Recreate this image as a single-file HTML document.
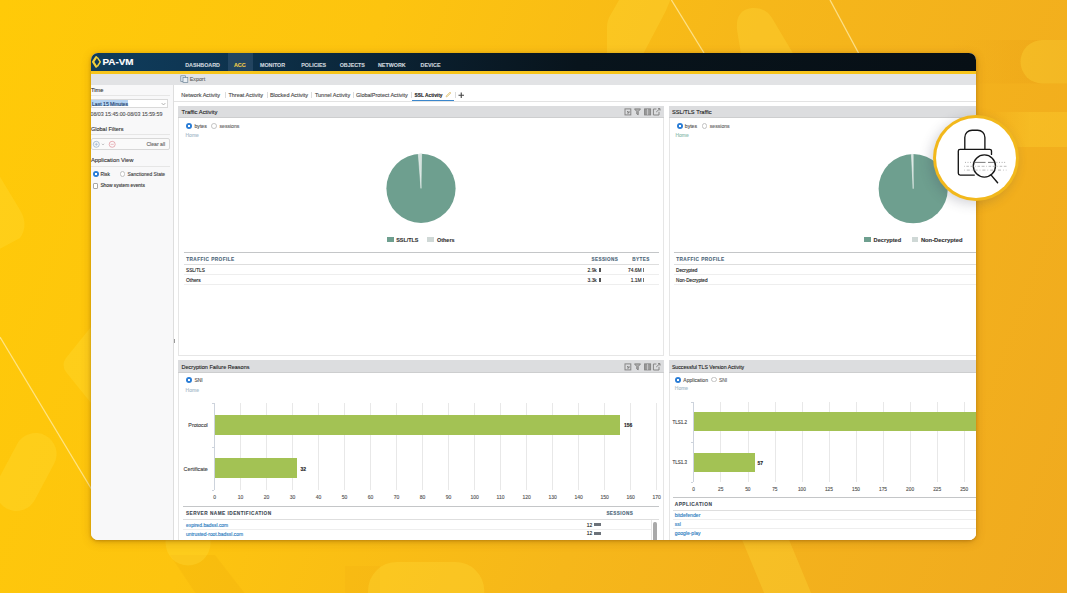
<!DOCTYPE html><html><head><meta charset="utf-8"><style>
*{box-sizing:border-box;margin:0;padding:0}
html,body{width:1067px;height:593px;overflow:hidden}
body{position:relative;font-family:"Liberation Sans",sans-serif;color:#333;
background:linear-gradient(110deg,#ffca08 0%,#fdc40f 30%,#f6b71a 60%,#f0aa1f 100%)}
.a{position:absolute;white-space:nowrap;line-height:1;-webkit-text-stroke:0.12px currentColor}
.win{position:absolute;left:91px;top:53px;width:885px;height:487px;border-radius:7px;overflow:hidden;background:#fff;
box-shadow:0 1px 3px rgba(120,70,0,0.35),0 2px 10px rgba(140,80,0,0.3)}
.in{position:absolute;left:-91px;top:-53px;width:1067px;height:593px}
</style></head><body>
<svg class="a" style="left:0;top:0" width="1067" height="593" viewBox="0 0 1067 593">
<defs><linearGradient id="dk" x1="0" x2="1"><stop offset="0" stop-color="rgb(210,120,0)" stop-opacity="0"/><stop offset="1" stop-color="rgb(210,120,0)" stop-opacity="0.13"/></linearGradient></defs>
<rect x="950" y="40" width="120" height="43.5" fill="url(#dk)"/>
<defs><linearGradient id="lt" x1="0" x2="1"><stop offset="0" stop-color="rgb(255,215,50)" stop-opacity="0"/><stop offset="0.5" stop-color="rgb(255,215,50)" stop-opacity="0.3"/><stop offset="1" stop-color="rgb(255,215,50)" stop-opacity="0.3"/></linearGradient></defs>
<rect x="990" y="112" width="80" height="35" fill="url(#lt)"/>
<g fill="rgba(200,110,0,0.07)">
<path d="M345 566 H380 V600 H345 Z" opacity="0.6"/>
<path d="M170 555 L215 555 L250 600 L200 600 Z"/>
</g>
<g fill="rgba(255,222,60,0.3)">
<!-- top pill left -->
<path d="M607 60 V27 Q607 20 611 14 L622 -5 H672 Q668 8 660 22 L640 60 Z"/>
<!-- top pill right -->
<path d="M742 60 L737 30 Q735 10 752 8 Q765 7 772 18 L797 60 Z"/>
<!-- top-right horizontal pill -->
<rect x="1020.5" y="40" width="90" height="43.5" rx="21.75"/>
<!-- left upper chevron -->
<path d="M-10 160 L20 210 Q29 225 20 238 L-10 254 Z"/>
<!-- left chevron near window -->
<path d="M95 322 L66 358 Q61 365 66 372 L95 408 Z"/>
<!-- left pill -->
<rect x="5" y="430.6" width="42" height="82.8" rx="21" transform="rotate(28 26 472)"/>
<!-- bottom pill small -->
<path d="M165.6 530 V543 A22.5 22.5 0 0 0 210.6 543 V530 Z"/>
<!-- bottom big pill -->
<rect x="368" y="561.9" width="116.3" height="60" rx="29"/>
<!-- bottom right stripe -->
<path d="M738 530 L785 530 L814 600 L767 600 Z"/>
</g>
<g stroke="rgba(255,238,170,0.75)" stroke-width="1.3">
<line x1="671.4" y1="0" x2="704" y2="53"/>
<line x1="830" y1="0" x2="858.5" y2="53"/>
<line x1="0" y1="337" x2="92" y2="490"/>
</g>
</svg>
<div class="win"><div class="in">
<div class="a" style="left:91px;top:53px;width:885.00px;height:18.00px;background:linear-gradient(90deg,#0f3c5c 0%,#0e3653 12%,#0c2b41 25%,#0a1d2b 40%,#08141c 55%,#070f15 100%);"></div>
<div class="a" style="left:227.5px;top:53px;width:25.00px;height:18.00px;background:rgba(90,120,150,0.28);"></div>
<svg class="a" style="left:91px;top:56px" width="11" height="12" viewBox="0 0 11 12">
<path d="M5.2 1.2 L2.1 5.9 L5.2 10.6" fill="none" stroke="#f1cf3a" stroke-width="2.2" stroke-linejoin="round" stroke-linecap="round"/>
<path d="M6.6 1.8 L9.3 5.9 L6.6 10" fill="none" stroke="#f1cf3a" stroke-width="1.5" stroke-linejoin="round" stroke-linecap="round"/>
</svg>
<div class="a" style="left:102.5px;top:56.55px;font-size:9.9px;color:#ffffff;font-weight:bold;">PA-VM</div>
<div class="a" style="left:185.2px;top:63.04px;font-size:5.35px;color:#cdd6de;font-weight:bold;">DASHBOARD</div>
<div class="a" style="left:234px;top:63.04px;font-size:5.35px;color:#f0cf4a;font-weight:bold;">ACC</div>
<div class="a" style="left:260px;top:63.04px;font-size:5.35px;color:#cdd6de;font-weight:bold;">MONITOR</div>
<div class="a" style="left:301.2px;top:63.04px;font-size:5.35px;color:#cdd6de;font-weight:bold;">POLICIES</div>
<div class="a" style="left:339.7px;top:63.04px;font-size:5.35px;color:#cdd6de;font-weight:bold;">OBJECTS</div>
<div class="a" style="left:378px;top:63.04px;font-size:5.35px;color:#cdd6de;font-weight:bold;">NETWORK</div>
<div class="a" style="left:420.6px;top:63.04px;font-size:5.35px;color:#cdd6de;font-weight:bold;">DEVICE</div>
<div class="a" style="left:91px;top:71px;width:885.00px;height:2.60px;background:#f7c51c;"></div>
<div class="a" style="left:91px;top:73.6px;width:885.00px;height:11.40px;background:#e2e3e5;"></div>
<svg class="a" style="left:180px;top:75px" width="9" height="8" viewBox="0 0 9 8">
<rect x="0.8" y="0.8" width="4.6" height="5.8" fill="#dde6ee" stroke="#6f8598" stroke-width="0.7"/>
<rect x="3" y="2.6" width="4.8" height="4.8" fill="#e9eef3" stroke="#6f8598" stroke-width="0.7"/>
</svg>
<div class="a" style="left:189.8px;top:77.11px;font-size:5.3px;color:#666;">Export</div>
<div class="a" style="left:91px;top:85px;width:82.00px;height:455.00px;background:#f8f8f9;"></div>
<div class="a" style="left:173px;top:85px;width:1.00px;height:455.00px;background:#dedede;"></div>
<div class="a" style="left:91px;top:88.42px;font-size:5.7px;color:#333;">Time</div>
<div class="a" style="left:91px;top:95.2px;width:79.00px;height:0.80px;background:#e6e6e6;"></div>
<div class="a" style="left:91px;top:99.3px;width:76.50px;height:8.70px;background:#ffffff;border:0.8px solid #d9d9d9;"></div>
<div class="a" style="left:91px;top:100.4px;width:37.00px;height:6.00px;background:#b4d3f2;"></div>
<div class="a" style="left:92px;top:101.51px;font-size:5.1px;color:#1d3d6a;">Last 15 Minutes</div>
<svg class="a" style="left:160.5px;top:102px" width="5" height="4" viewBox="0 0 5 4"><path d="M0.6 1 L2.5 3 L4.4 1" fill="none" stroke="#888" stroke-width="0.6"/></svg>
<div class="a" style="left:90.5px;top:112.38px;font-size:5.25px;color:#555;">08/03 15:45:00-08/03 15:59:59</div>
<div class="a" style="left:91px;top:127.11px;font-size:5.5px;color:#333;">Global Filters</div>
<div class="a" style="left:91px;top:134.2px;width:79.00px;height:0.80px;background:#e6e6e6;"></div>
<div class="a" style="left:91px;top:138px;width:78.50px;height:12.00px;background:#fafafa;border:0.8px solid #d8d8d8;border-radius:2px;"></div>
<svg class="a" style="left:92px;top:139.5px" width="24" height="9" viewBox="0 0 24 9">
<circle cx="4.3" cy="4.3" r="3" fill="none" stroke="#8fa9c7" stroke-width="0.7"/>
<path d="M4.3 2.7 V5.9 M2.7 4.3 H5.9" stroke="#8fa9c7" stroke-width="0.6"/>
<path d="M10 3.8 L11 4.8 L12 3.8" fill="none" stroke="#888" stroke-width="0.6"/>
<circle cx="20.2" cy="4.3" r="3" fill="none" stroke="#e0909a" stroke-width="0.7"/>
<path d="M18.6 4.3 H21.8" stroke="#e0909a" stroke-width="0.6"/>
</svg>
<div class="a" style="left:146.4px;top:142.01px;font-size:5.15px;color:#666;">Clear all</div>
<div class="a" style="left:91px;top:157.69px;font-size:5.8px;color:#333;">Application View</div>
<div class="a" style="left:91px;top:166px;width:79.00px;height:0.80px;background:#e6e6e6;"></div>
<div class="a" style="left:92.70px;top:170.70px;width:6px;height:6px;border-radius:50%;background:radial-gradient(circle,#fff 0,#fff 0.9px,#2a7dd6 1.4px)"></div>
<div class="a" style="left:100.5px;top:172.91px;font-size:4.8px;color:#333;">Risk</div>
<div class="a" style="left:119.60px;top:170.80px;width:5.8px;height:5.8px;border-radius:50%;background:#fff;border:0.6px solid #c2c2c2"></div>
<div class="a" style="left:127.5px;top:172.91px;font-size:4.95px;color:#444;">Sanctioned State</div>
<div class="a" style="left:92.7px;top:182.8px;width:5.70px;height:5.90px;background:#fff;border:0.7px solid #a8a8a8;border-radius:1px;"></div>
<div class="a" style="left:100.4px;top:184.39px;font-size:4.85px;color:#333;">Show system events</div>
<div class="a" style="left:173.5px;top:337px;width:1.00px;height:6.00px;background:#aaa;"></div>
<div class="a" style="left:174px;top:85px;width:802.00px;height:455.00px;background:#ffffff;"></div>
<div class="a" style="left:174.2px;top:338.5px;width:1.20px;height:4.00px;background:#999;"></div>
<div class="a" style="left:181.3px;top:92.91px;font-size:5.5px;color:#4a4a4a;">Network Activity</div>
<div class="a" style="left:228.4px;top:92.91px;font-size:5.5px;color:#4a4a4a;">Threat Activity</div>
<div class="a" style="left:269.9px;top:92.91px;font-size:5.5px;color:#4a4a4a;">Blocked Activity</div>
<div class="a" style="left:314.9px;top:92.91px;font-size:5.5px;color:#4a4a4a;">Tunnel Activity</div>
<div class="a" style="left:355.9px;top:92.91px;font-size:5.5px;color:#4a4a4a;">GlobalProtect Activity</div>
<div class="a" style="left:224.9px;top:91.8px;width:0.70px;height:5.80px;background:#dcdcdc;"></div>
<div class="a" style="left:266.7px;top:91.8px;width:0.70px;height:5.80px;background:#dcdcdc;"></div>
<div class="a" style="left:311.4px;top:91.8px;width:0.70px;height:5.80px;background:#dcdcdc;"></div>
<div class="a" style="left:353.3px;top:91.8px;width:0.70px;height:5.80px;background:#dcdcdc;"></div>
<div class="a" style="left:411.4px;top:91.8px;width:0.70px;height:5.80px;background:#dcdcdc;"></div>
<div class="a" style="left:455px;top:91.8px;width:0.70px;height:5.80px;background:#dcdcdc;"></div>
<div class="a" style="left:414.5px;top:93.74px;font-size:4.85px;color:#222;font-weight:bold;">SSL Activity</div>
<svg class="a" style="left:445px;top:91px" width="7" height="7" viewBox="0 0 7 7"><path d="M1 6 L1.4 4.6 L5 1 L6 2 L2.4 5.6 Z" fill="#f3e4b8" stroke="#d8b868" stroke-width="0.5"/></svg>
<svg class="a" style="left:458px;top:91.5px" width="6.5" height="6.5" viewBox="0 0 6.5 6.5"><path d="M3.25 0.5 V6 M0.5 3.25 H6" stroke="#444" stroke-width="1.1"/></svg>
<div class="a" style="left:412px;top:99.6px;width:42.30px;height:1.00px;background:#3b87cc;"></div>
<div class="a" style="left:174px;top:100.6px;width:802.00px;height:1.00px;background:#e3e3e3;"></div>
<div class="a" style="left:178.2px;top:105.8px;width:485.60px;height:250.50px;background:#ffffff;border:0.8px solid #e6e6e6;"></div>
<div class="a" style="left:178.2px;top:105.8px;width:485.60px;height:12.60px;background:#dcdddf;border-bottom:0.6px solid #cdcecf;"></div>
<div class="a" style="left:181.6px;top:110.21px;font-size:5.85px;color:#1a1a1a;-webkit-text-stroke:0.1px #1a1a1a;">Traffic Activity</div>
<svg class="a" style="left:623.8px;top:108.39999999999999px" width="38" height="8" viewBox="0 0 38 8">
<g fill="none" stroke="#858585" stroke-width="1">
<rect x="1" y="0.9" width="5.8" height="6"/><path d="M3 3 L5 5 M5 3 V5 H3"/>
<path d="M10.5 0.9 H16.5 L14.2 3.6 V6.8 L12.8 6 V3.6 Z" fill="#b0b0b0"/>
<rect x="20.6" y="0.9" width="6" height="6" fill="#9a9a9a"/><path d="M23.6 0.9 V6.9" stroke="#dcdddf" stroke-width="0.7"/>
<path d="M35 3.8 V7 H29.4 V1 H32.4"/><path d="M32.2 4 L36 0.6 M34 0.6 H36 V2.6"/>
</g></svg>
<div class="a" style="left:186.30px;top:123.10px;width:6px;height:6px;border-radius:50%;background:radial-gradient(circle,#fff 0,#fff 0.9px,#2a7dd6 1.4px)"></div>
<div class="a" style="left:194.5px;top:124.41px;font-size:5.1px;color:#555;">bytes</div>
<div class="a" style="left:211.40px;top:123.20px;width:5.8px;height:5.8px;border-radius:50%;background:#fff;border:0.6px solid #c2c2c2"></div>
<div class="a" style="left:219.5px;top:124.41px;font-size:5.1px;color:#666;">sessions</div>
<div class="a" style="left:185.5px;top:133.31px;font-size:5.0px;color:#a8bccb;">Home</div>
<svg class="a" style="left:0;top:0" width="1067" height="593" viewBox="0 0 1067 593">
<circle cx="421.0" cy="188.4" r="34.6" fill="#6e9f8f"/>
<path d="M421.0 188.4 L418.29 153.91 A34.6 34.6 0 0 1 421.60 153.81 Z" fill="#d4e2dd" stroke="#f4f7f6" stroke-width="0.5"/>
</svg>
<div class="a" style="left:386.5px;top:237.2px;width:7.10px;height:5.20px;background:#6e9f8f;"></div>
<div class="a" style="left:396.2px;top:237.94px;font-size:5.4px;color:#333;font-weight:bold;">SSL/TLS</div>
<div class="a" style="left:427.2px;top:237.2px;width:7.10px;height:5.20px;background:#cfd8d6;"></div>
<div class="a" style="left:437.0px;top:237.94px;font-size:5.45px;color:#333;font-weight:bold;">Others</div>
<div class="a" style="left:184px;top:251.7px;width:475.00px;height:0.90px;background:#c4c6c8;"></div>
<div class="a" style="left:186.2px;top:257.74px;font-size:4.7px;color:#4d6679;font-weight:bold;letter-spacing:0.45px;">TRAFFIC PROFILE</div>
<div class="a" style="left:618.2px;top:257.54px;font-size:4.6px;color:#4d6679;font-weight:bold;letter-spacing:0.4px;transform:translateX(-100%);">SESSIONS</div>
<div class="a" style="left:649.7px;top:257.54px;font-size:4.6px;color:#4d6679;font-weight:bold;letter-spacing:0.4px;transform:translateX(-100%);">BYTES</div>
<div class="a" style="left:184px;top:264.4px;width:475.00px;height:0.80px;background:#dedede;"></div>
<div class="a" style="left:186px;top:268.91px;font-size:4.7px;color:#222;">SSL/TLS</div>
<div class="a" style="left:596.8px;top:268.91px;font-size:4.9px;color:#222;transform:translateX(-100%);">2.9k</div>
<div class="a" style="left:599.2px;top:267.9px;width:1.40px;height:4.10px;background:#555;"></div>
<div class="a" style="left:641.6px;top:268.91px;font-size:4.9px;color:#222;transform:translateX(-100%);">74.6M</div>
<div class="a" style="left:642.6px;top:267.9px;width:0.70px;height:4.10px;background:#777;"></div>
<div class="a" style="left:184px;top:274.3px;width:475.00px;height:0.70px;background:#eeeeee;"></div>
<div class="a" style="left:186px;top:278.71px;font-size:4.9px;color:#222;">Others</div>
<div class="a" style="left:596.8px;top:278.61px;font-size:4.9px;color:#222;transform:translateX(-100%);">3.3k</div>
<div class="a" style="left:599.2px;top:277.6px;width:1.40px;height:4.10px;background:#555;"></div>
<div class="a" style="left:641.6px;top:278.61px;font-size:4.9px;color:#222;transform:translateX(-100%);">1.1M</div>
<div class="a" style="left:642.6px;top:277.6px;width:0.70px;height:4.10px;background:#777;"></div>
<div class="a" style="left:184px;top:284px;width:475.00px;height:0.70px;background:#eeeeee;"></div>
<div class="a" style="left:668.5px;top:105.8px;width:321.50px;height:250.50px;background:#ffffff;border:0.8px solid #e6e6e6;"></div>
<div class="a" style="left:668.5px;top:105.8px;width:321.50px;height:12.60px;background:#dcdddf;border-bottom:0.6px solid #cdcecf;"></div>
<div class="a" style="left:671.9px;top:110.22px;font-size:5.7px;color:#1a1a1a;-webkit-text-stroke:0.1px #1a1a1a;">SSL/TLS Traffic</div>
<div class="a" style="left:676.60px;top:122.90px;width:6px;height:6px;border-radius:50%;background:radial-gradient(circle,#fff 0,#fff 0.9px,#2a7dd6 1.4px)"></div>
<div class="a" style="left:684.8px;top:124.21px;font-size:5.1px;color:#555;">bytes</div>
<div class="a" style="left:701.70px;top:123.00px;width:5.8px;height:5.8px;border-radius:50%;background:#fff;border:0.6px solid #c2c2c2"></div>
<div class="a" style="left:709.8px;top:124.21px;font-size:5.1px;color:#666;">sessions</div>
<div class="a" style="left:675.4px;top:133.41px;font-size:5.0px;color:#8fc0b0;">Home</div>
<svg class="a" style="left:0;top:0" width="1067" height="593" viewBox="0 0 1067 593">
<circle cx="913.2" cy="188.7" r="34.6" fill="#6e9f8f"/>
<path d="M913.2 188.7 L911.39 154.15 A34.6 34.6 0 0 1 913.20 154.10 Z" fill="#d4e2dd" stroke="#f4f7f6" stroke-width="0.5"/>
</svg>
<div class="a" style="left:864.3px;top:237.4px;width:7.00px;height:5.00px;background:#6e9f8f;"></div>
<div class="a" style="left:873.6px;top:237.94px;font-size:5.65px;color:#333;font-weight:bold;">Decrypted</div>
<div class="a" style="left:911.6px;top:237.4px;width:6.50px;height:5.00px;background:#cfd8d6;"></div>
<div class="a" style="left:920.9px;top:237.94px;font-size:5.8px;color:#333;font-weight:bold;">Non-Decrypted</div>
<div class="a" style="left:674px;top:251.7px;width:316.00px;height:0.90px;background:#c4c6c8;"></div>
<div class="a" style="left:676.2px;top:257.74px;font-size:4.7px;color:#4d6679;font-weight:bold;letter-spacing:0.45px;">TRAFFIC PROFILE</div>
<div class="a" style="left:674px;top:264.4px;width:316.00px;height:0.80px;background:#dedede;"></div>
<div class="a" style="left:676px;top:268.91px;font-size:4.7px;color:#222;">Decrypted</div>
<div class="a" style="left:674px;top:274.3px;width:316.00px;height:0.70px;background:#eeeeee;"></div>
<div class="a" style="left:676px;top:278.71px;font-size:4.7px;color:#222;">Non-Decrypted</div>
<div class="a" style="left:674px;top:284px;width:316.00px;height:0.70px;background:#eeeeee;"></div>
<div class="a" style="left:178.2px;top:360.4px;width:485.60px;height:199.60px;background:#ffffff;border:0.8px solid #e6e6e6;"></div>
<div class="a" style="left:178.2px;top:360.4px;width:485.60px;height:12.60px;background:#dcdddf;border-bottom:0.6px solid #cdcecf;"></div>
<div class="a" style="left:181.6px;top:364.81px;font-size:5.5px;color:#1a1a1a;-webkit-text-stroke:0.1px #1a1a1a;">Decryption Failure Reasons</div>
<svg class="a" style="left:623.8px;top:363.0px" width="38" height="8" viewBox="0 0 38 8">
<g fill="none" stroke="#858585" stroke-width="1">
<rect x="1" y="0.9" width="5.8" height="6"/><path d="M3 3 L5 5 M5 3 V5 H3"/>
<path d="M10.5 0.9 H16.5 L14.2 3.6 V6.8 L12.8 6 V3.6 Z" fill="#b0b0b0"/>
<rect x="20.6" y="0.9" width="6" height="6" fill="#9a9a9a"/><path d="M23.6 0.9 V6.9" stroke="#dcdddf" stroke-width="0.7"/>
<path d="M35 3.8 V7 H29.4 V1 H32.4"/><path d="M32.2 4 L36 0.6 M34 0.6 H36 V2.6"/>
</g></svg>
<div class="a" style="left:186.20px;top:377.10px;width:6px;height:6px;border-radius:50%;background:radial-gradient(circle,#fff 0,#fff 0.9px,#2a7dd6 1.4px)"></div>
<div class="a" style="left:194.4px;top:378.31px;font-size:5.0px;color:#555;">SNI</div>
<div class="a" style="left:185.6px;top:388.11px;font-size:5.0px;color:#a8bccb;">Home</div>
<div class="a" style="left:240.3px;top:403.3px;width:0.80px;height:87.20px;background:#e8e8e8;"></div>
<div class="a" style="left:266.3px;top:403.3px;width:0.80px;height:87.20px;background:#e8e8e8;"></div>
<div class="a" style="left:292.3px;top:403.3px;width:0.80px;height:87.20px;background:#e8e8e8;"></div>
<div class="a" style="left:318.3px;top:403.3px;width:0.80px;height:87.20px;background:#e8e8e8;"></div>
<div class="a" style="left:344.3px;top:403.3px;width:0.80px;height:87.20px;background:#e8e8e8;"></div>
<div class="a" style="left:370.3px;top:403.3px;width:0.80px;height:87.20px;background:#e8e8e8;"></div>
<div class="a" style="left:396.3px;top:403.3px;width:0.80px;height:87.20px;background:#e8e8e8;"></div>
<div class="a" style="left:422.3px;top:403.3px;width:0.80px;height:87.20px;background:#e8e8e8;"></div>
<div class="a" style="left:448.3px;top:403.3px;width:0.80px;height:87.20px;background:#e8e8e8;"></div>
<div class="a" style="left:474.3px;top:403.3px;width:0.80px;height:87.20px;background:#e8e8e8;"></div>
<div class="a" style="left:500.3px;top:403.3px;width:0.80px;height:87.20px;background:#e8e8e8;"></div>
<div class="a" style="left:526.3px;top:403.3px;width:0.80px;height:87.20px;background:#e8e8e8;"></div>
<div class="a" style="left:552.3px;top:403.3px;width:0.80px;height:87.20px;background:#e8e8e8;"></div>
<div class="a" style="left:578.3px;top:403.3px;width:0.80px;height:87.20px;background:#e8e8e8;"></div>
<div class="a" style="left:604.3px;top:403.3px;width:0.80px;height:87.20px;background:#e8e8e8;"></div>
<div class="a" style="left:630.3px;top:403.3px;width:0.80px;height:87.20px;background:#e8e8e8;"></div>
<div class="a" style="left:656.3px;top:403.3px;width:0.80px;height:87.20px;background:#e8e8e8;"></div>
<div class="a" style="left:214.0px;top:403.3px;width:0.90px;height:87.20px;background:#cdd3dc;"></div>
<div class="a" style="left:211.8px;top:403.3px;width:2.50px;height:0.70px;background:#cdd3dc;"></div>
<div class="a" style="left:211.8px;top:446.9px;width:2.50px;height:0.70px;background:#cdd3dc;"></div>
<div class="a" style="left:211.8px;top:490.0px;width:2.50px;height:0.70px;background:#cdd3dc;"></div>
<div class="a" style="left:214.9px;top:414.5px;width:405.00px;height:20.40px;background:#a3c254;"></div>
<div class="a" style="left:214.9px;top:458.4px;width:82.60px;height:20.00px;background:#a3c254;"></div>
<div class="a" style="left:623.9000000000001px;top:423.24px;font-size:5.0px;color:#222;font-weight:bold;">156</div>
<div class="a" style="left:300.5px;top:467.24px;font-size:5.0px;color:#222;font-weight:bold;">32</div>
<div class="a" style="left:207.8px;top:423.41px;font-size:5.3px;color:#444;transform:translateX(-100%);">Protocol</div>
<div class="a" style="left:207.8px;top:467.09px;font-size:5.4px;color:#444;transform:translateX(-100%);">Certificate</div>
<div class="a" style="left:214.60000000000002px;top:494.71px;font-size:5.0px;color:#555;transform:translateX(-50%);">0</div>
<div class="a" style="left:240.60000000000002px;top:494.71px;font-size:5.0px;color:#555;transform:translateX(-50%);">10</div>
<div class="a" style="left:266.6px;top:494.71px;font-size:5.0px;color:#555;transform:translateX(-50%);">20</div>
<div class="a" style="left:292.6px;top:494.71px;font-size:5.0px;color:#555;transform:translateX(-50%);">30</div>
<div class="a" style="left:318.6px;top:494.71px;font-size:5.0px;color:#555;transform:translateX(-50%);">40</div>
<div class="a" style="left:344.6px;top:494.71px;font-size:5.0px;color:#555;transform:translateX(-50%);">50</div>
<div class="a" style="left:370.6px;top:494.71px;font-size:5.0px;color:#555;transform:translateX(-50%);">60</div>
<div class="a" style="left:396.6px;top:494.71px;font-size:5.0px;color:#555;transform:translateX(-50%);">70</div>
<div class="a" style="left:422.6px;top:494.71px;font-size:5.0px;color:#555;transform:translateX(-50%);">80</div>
<div class="a" style="left:448.6px;top:494.71px;font-size:5.0px;color:#555;transform:translateX(-50%);">90</div>
<div class="a" style="left:474.6px;top:494.71px;font-size:5.0px;color:#555;transform:translateX(-50%);">100</div>
<div class="a" style="left:500.6px;top:494.71px;font-size:5.0px;color:#555;transform:translateX(-50%);">110</div>
<div class="a" style="left:526.5999999999999px;top:494.71px;font-size:5.0px;color:#555;transform:translateX(-50%);">120</div>
<div class="a" style="left:552.5999999999999px;top:494.71px;font-size:5.0px;color:#555;transform:translateX(-50%);">130</div>
<div class="a" style="left:578.5999999999999px;top:494.71px;font-size:5.0px;color:#555;transform:translateX(-50%);">140</div>
<div class="a" style="left:604.5999999999999px;top:494.71px;font-size:5.0px;color:#555;transform:translateX(-50%);">150</div>
<div class="a" style="left:630.5999999999999px;top:494.71px;font-size:5.0px;color:#555;transform:translateX(-50%);">160</div>
<div class="a" style="left:656.5999999999999px;top:494.71px;font-size:5.0px;color:#555;transform:translateX(-50%);">170</div>
<div class="a" style="left:183.2px;top:505.8px;width:475.80px;height:0.90px;background:#c4c6c8;"></div>
<div class="a" style="left:185.9px;top:511.74px;font-size:4.7px;color:#3f4a54;font-weight:bold;letter-spacing:0.5px;">SERVER NAME IDENTIFICATION</div>
<div class="a" style="left:633.1px;top:511.74px;font-size:4.6px;color:#4d6679;font-weight:bold;letter-spacing:0.4px;transform:translateX(-100%);">SESSIONS</div>
<div class="a" style="left:183.2px;top:519px;width:475.80px;height:0.80px;background:#dedede;"></div>
<div class="a" style="left:186px;top:523.91px;font-size:4.9px;color:#2a7bc0;">expired.badssl.com</div>
<div class="a" style="left:592.2px;top:523.61px;font-size:4.9px;color:#222;transform:translateX(-100%);">12</div>
<div class="a" style="left:594.2px;top:522.7px;width:6.70px;height:3.60px;background:#6c7279;"></div>
<div class="a" style="left:183.2px;top:528.8px;width:467.80px;height:0.70px;background:#eeeeee;"></div>
<div class="a" style="left:186px;top:532.71px;font-size:4.95px;color:#2a7bc0;">untrusted-root.badssl.com</div>
<div class="a" style="left:592.2px;top:532.41px;font-size:4.9px;color:#222;transform:translateX(-100%);">12</div>
<div class="a" style="left:594.2px;top:531.5px;width:6.70px;height:3.60px;background:#6c7279;"></div>
<div class="a" style="left:650.6px;top:520px;width:0.60px;height:20.00px;background:#e6e6e6;"></div>
<div class="a" style="left:653.3px;top:521.6px;width:3.40px;height:23.40px;background:#a9a9a9;border-radius:1.7px;"></div>
<div class="a" style="left:668.5px;top:360.4px;width:321.50px;height:199.60px;background:#ffffff;border:0.8px solid #e6e6e6;"></div>
<div class="a" style="left:668.5px;top:360.4px;width:321.50px;height:12.60px;background:#dcdddf;border-bottom:0.6px solid #cdcecf;"></div>
<div class="a" style="left:671.9px;top:364.59px;font-size:5.2px;color:#1a1a1a;-webkit-text-stroke:0.1px #1a1a1a;">Successful TLS Version Activity</div>
<div class="a" style="left:675.10px;top:376.60px;width:6px;height:6px;border-radius:50%;background:radial-gradient(circle,#fff 0,#fff 0.9px,#2a7dd6 1.4px)"></div>
<div class="a" style="left:683.3px;top:377.69px;font-size:5.05px;color:#555;">Application</div>
<div class="a" style="left:710.80px;top:376.70px;width:5.8px;height:5.8px;border-radius:50%;background:#fff;border:0.6px solid #c2c2c2"></div>
<div class="a" style="left:718.9px;top:377.91px;font-size:5.0px;color:#666;">SNI</div>
<div class="a" style="left:674.8px;top:386.41px;font-size:5.0px;color:#a8bccb;">Home</div>
<div class="a" style="left:720.4499999999999px;top:401.5px;width:0.80px;height:80.70px;background:#e8e8e8;"></div>
<div class="a" style="left:747.5px;top:401.5px;width:0.80px;height:80.70px;background:#e8e8e8;"></div>
<div class="a" style="left:774.55px;top:401.5px;width:0.80px;height:80.70px;background:#e8e8e8;"></div>
<div class="a" style="left:801.6px;top:401.5px;width:0.80px;height:80.70px;background:#e8e8e8;"></div>
<div class="a" style="left:828.65px;top:401.5px;width:0.80px;height:80.70px;background:#e8e8e8;"></div>
<div class="a" style="left:855.7px;top:401.5px;width:0.80px;height:80.70px;background:#e8e8e8;"></div>
<div class="a" style="left:882.75px;top:401.5px;width:0.80px;height:80.70px;background:#e8e8e8;"></div>
<div class="a" style="left:909.8px;top:401.5px;width:0.80px;height:80.70px;background:#e8e8e8;"></div>
<div class="a" style="left:936.85px;top:401.5px;width:0.80px;height:80.70px;background:#e8e8e8;"></div>
<div class="a" style="left:963.9px;top:401.5px;width:0.80px;height:80.70px;background:#e8e8e8;"></div>
<div class="a" style="left:990.95px;top:401.5px;width:0.80px;height:80.70px;background:#e8e8e8;"></div>
<div class="a" style="left:693.1px;top:401.5px;width:0.90px;height:80.70px;background:#cdd3dc;"></div>
<div class="a" style="left:690.9px;top:401.5px;width:2.50px;height:0.70px;background:#cdd3dc;"></div>
<div class="a" style="left:690.9px;top:441.9px;width:2.50px;height:0.70px;background:#cdd3dc;"></div>
<div class="a" style="left:690.9px;top:481.6px;width:2.50px;height:0.70px;background:#cdd3dc;"></div>
<div class="a" style="left:694.0px;top:412.2px;width:296.00px;height:19.00px;background:#a3c254;"></div>
<div class="a" style="left:694.0px;top:452.5px;width:61.07px;height:19.10px;background:#a3c254;"></div>
<div class="a" style="left:757.6px;top:460.74px;font-size:5.0px;color:#222;font-weight:bold;">57</div>
<div class="a" style="left:687.1px;top:421.12px;font-size:4.5px;color:#444;transform:translateX(-100%);">TLS1.2</div>
<div class="a" style="left:687.1px;top:461.02px;font-size:4.5px;color:#444;transform:translateX(-100%);">TLS1.3</div>
<div class="a" style="left:693.6999999999999px;top:488.11px;font-size:4.8px;color:#555;transform:translateX(-50%);">0</div>
<div class="a" style="left:720.7499999999999px;top:488.11px;font-size:4.8px;color:#555;transform:translateX(-50%);">25</div>
<div class="a" style="left:747.8px;top:488.11px;font-size:4.8px;color:#555;transform:translateX(-50%);">50</div>
<div class="a" style="left:774.8499999999999px;top:488.11px;font-size:4.8px;color:#555;transform:translateX(-50%);">75</div>
<div class="a" style="left:801.9px;top:488.11px;font-size:4.8px;color:#555;transform:translateX(-50%);">100</div>
<div class="a" style="left:828.9499999999999px;top:488.11px;font-size:4.8px;color:#555;transform:translateX(-50%);">125</div>
<div class="a" style="left:856.0px;top:488.11px;font-size:4.8px;color:#555;transform:translateX(-50%);">150</div>
<div class="a" style="left:883.05px;top:488.11px;font-size:4.8px;color:#555;transform:translateX(-50%);">175</div>
<div class="a" style="left:910.0999999999999px;top:488.11px;font-size:4.8px;color:#555;transform:translateX(-50%);">200</div>
<div class="a" style="left:937.15px;top:488.11px;font-size:4.8px;color:#555;transform:translateX(-50%);">225</div>
<div class="a" style="left:964.1999999999999px;top:488.11px;font-size:4.8px;color:#555;transform:translateX(-50%);">250</div>
<div class="a" style="left:991.25px;top:488.11px;font-size:4.8px;color:#555;transform:translateX(-50%);">275</div>
<div class="a" style="left:673px;top:497.2px;width:317.00px;height:1.00px;background:#c4c6c8;"></div>
<div class="a" style="left:674.7px;top:502.74px;font-size:4.8px;color:#3f4a54;font-weight:bold;letter-spacing:0.5px;">APPLICATION</div>
<div class="a" style="left:673px;top:509.9px;width:317.00px;height:0.80px;background:#dedede;"></div>
<div class="a" style="left:674.7px;top:513.21px;font-size:5.15px;color:#2a7bc0;">bitdefender</div>
<div class="a" style="left:673px;top:519.1px;width:317.00px;height:0.70px;background:#eeeeee;"></div>
<div class="a" style="left:674.7px;top:522.21px;font-size:5.0px;color:#2a7bc0;">ssl</div>
<div class="a" style="left:673px;top:527.9px;width:317.00px;height:0.70px;background:#eeeeee;"></div>
<div class="a" style="left:674.7px;top:531.31px;font-size:5.0px;color:#2a7bc0;">google-play</div>
</div></div>
<div class="a" style="left:933.3px;top:114.6px;width:86px;height:86px;border-radius:50%;background:#f2b81c;box-shadow:-3px 3px 12px rgba(60,60,80,0.22)"></div>
<div class="a" style="left:936.3px;top:117.6px;width:80px;height:80px;border-radius:50%;background:#ffffff"></div>
<svg class="a" style="left:0;top:0" width="1067" height="593" viewBox="0 0 1067 593">
<g fill="none" stroke="#161616" stroke-width="1.35" stroke-linecap="round" stroke-linejoin="round">
<path d="M964.8 149.3 V137.5 A7.3 7.3 0 0 1 972.1 130.2 H977.6 A7.3 7.3 0 0 1 984.9 137.5 V149.3"/>
<path d="M974.3 175.1 H960.1 A1.8 1.8 0 0 1 958.3 173.3 V151.1 A1.8 1.8 0 0 1 960.1 149.3 H989.7 A1.8 1.8 0 0 1 991.5 151.1 V154.4"/>
<circle cx="984.4" cy="166.0" r="11.1"/>
<path d="M991.6 175.6 L997.6 182.7" stroke-width="1.45"/>
</g>
<g fill="none" stroke-width="0.65">
<path d="M965 162.4 H973" stroke="#666" stroke-dasharray="0.8 1.8"/>
<path d="M975 162.4 H985.5 M988 162.4 H994.5" stroke="#333"/>
<path d="M996.5 162.4 H1006.5" stroke="#666" stroke-dasharray="0.8 1.8"/>
<path d="M964 166.3 H1006.5" stroke="#999" stroke-dasharray="0.8 1.6 2.5 1.6 3 1.6"/>
<path d="M964 170.1 H1006.5" stroke="#999" stroke-dasharray="0.8 2 3 2"/>
</g>
</svg>
</body></html>
